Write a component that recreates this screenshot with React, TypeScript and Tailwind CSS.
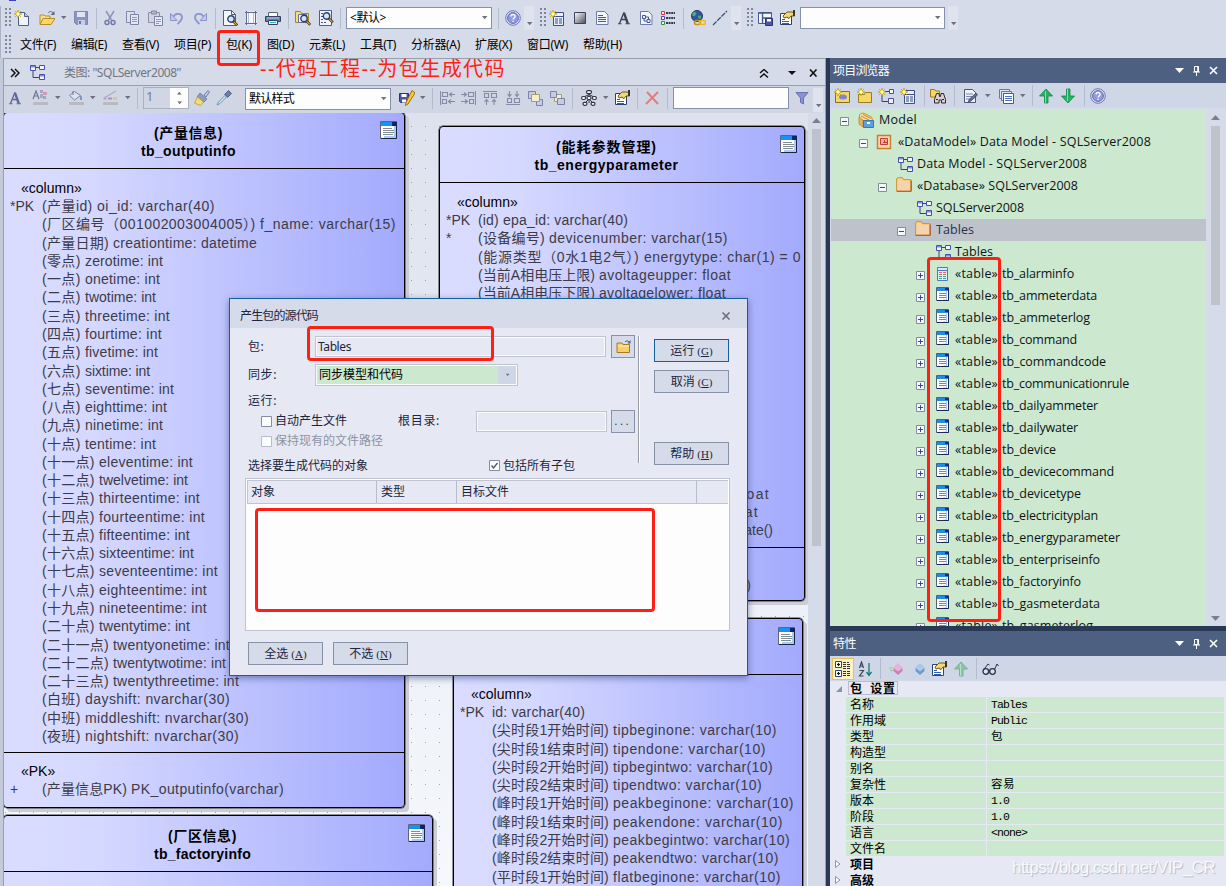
import { useLayoutEffect, useRef, useState, type ReactNode } from 'react';

/* ---------- text fitted to a given advance width ---------- */
function T({ w, className = '', children }: { w: number; className?: string; children: string }) {
  const ref = useRef<HTMLSpanElement>(null);
  const [ls, setLs] = useState(0);
  useLayoutEffect(() => {
    if (!ref.current) return;
    const natural = ref.current.getBoundingClientRect().width;
    setLs((w - natural) / children.length);
  }, []);
  return (
    <span ref={ref} className={`inline-block shrink-0 whitespace-pre ${className}`} style={{ letterSpacing: `${ls}px` }}>
      {children}
    </span>
  );
}

/* ---------- icons ---------- */
type P = { className?: string };
const I = ({ className = '', w = 16, h = 16, children }: { className?: string; w?: number; h?: number; children: ReactNode }) => (
  <svg width={w} height={h} viewBox={`0 0 ${w} ${h}`} className={`block shrink-0 ${className}`} fill="none">
    {children}
  </svg>
);
const Spark = () => (
  <g>
    <path d="M4 0v8M0 4h8M1.3 1.3l5.4 5.4M6.7 1.3L1.3 6.7" stroke="#b89500" />
    <path d="M4 1.2L6.8 4 4 6.8 1.2 4z" fill="#ffef5a" stroke="#d0ac00" strokeWidth=".7" />
    <circle cx="4" cy="4" r="1.2" fill="#fff" />
  </g>
);
const NewDoc = (p: P) => (
  <I {...p}>
    <path d="M4.5 2.5h6l4 4v9h-10z" fill="#eef3fd" stroke="#4f6183" />
    <path d="M10.5 2.5v4h4" fill="#b9c8e6" stroke="#4f6183" />
    <Spark />
  </I>
);
const OpenFolder = (p: P) => (
  <I {...p}>
    <path d="M1 14V5h4l1 1h5v3" fill="#f9e08c" stroke="#b98d24" />
    <path d="M1 14.5l3-6h12l-4 6z" fill="#fbd769" stroke="#b98d24" />
    <path d="M9 3c1.500-2 4-2 5 0" stroke="#5b6a85" />
    <path d="M15.500 1v4h-4z" fill="#5b6a85" />
  </I>
);
const Floppy = ({ className = '', dim = false }: P & { dim?: boolean }) => (
  <I className={className}>
    <path d="M1.500 1.500h13v13h-11l-2-2z" fill={dim ? '#8b93c2' : '#4b56a6'} stroke={dim ? '#7d86b5' : '#2b3477'} />
    <path d="M4 2h8v5H4z" fill="#dfe5f4" />
    <path d="M5 10h7v5H5z" fill="#c6cde4" />
    <path d="M6 11h2v3H6z" fill="#6a72a8" />
  </I>
);
const Cut = (p: P) => (
  <I {...p}>
    <path d="M4 1l5.500 9M12 1L6.500 10" stroke="#8d95b8" strokeWidth="1.500" />
    <circle cx="5" cy="12.500" r="2" stroke="#6d77a8" strokeWidth="1.400" />
    <circle cx="11" cy="12.500" r="2" stroke="#6d77a8" strokeWidth="1.400" />
  </I>
);
const Copy = (p: P) => (
  <I {...p}>
    <path d="M2.500 1.500h8v11h-8z" fill="#dbe0ef" stroke="#8189ad" />
    <path d="M6.500 4.500h8v10h-8z" fill="#e4e8f4" stroke="#7a83aa" />
    <path d="M8 7.500h5M8 9.500h5M8 11.500h5" stroke="#8f98bd" />
  </I>
);
const Paste = (p: P) => (
  <I {...p}>
    <path d="M1.500 2.500h11v10h-11z" fill="#d3d3dd" stroke="#8c8fa8" />
    <path d="M4.500 1h5v3h-5z" fill="#b4b9cf" stroke="#8085a3" />
    <path d="M7.500 6.500h8v9h-8z" fill="#e7eaf5" stroke="#7a83aa" />
    <path d="M9 9.500h5M9 11.500h5M9 13.500h3" stroke="#8f98bd" />
  </I>
);
const Undo = ({ className = '', flip = false }: P & { flip?: boolean }) => (
  <I className={className}>
    <g transform={flip ? 'translate(16 0) scale(-1 1)' : undefined}>
      <path d="M4 7.500C5.500 3 12.500 2.500 13 7c.3 3-2 4.500-4.500 7" stroke="#8b94cc" strokeWidth="1.800" />
      <path d="M1.500 3.500v7h6.500z" fill="#c3c9ea" stroke="#838cc4" strokeWidth=".9" />
    </g>
  </I>
);
const Lens = ({ x = 6, y = 6 }: { x?: number; y?: number }) => (
  <g transform={`translate(${x} ${y})`}>
    <circle cx="3" cy="3" r="3.200" fill="#cfe6fb" stroke="#2f3f68" strokeWidth="1.400" />
    <path d="M5.300 5.300l4 4" stroke="#3d3322" strokeWidth="2.600" />
    <path d="M5.800 5.800l3 3" stroke="#e8b23a" strokeWidth="1.100" />
  </g>
);
const Preview = (p: P) => (
  <I {...p}>
    <path d="M1.500 .5h8l4 4v11h-12z" fill="#f4f7fd" stroke="#4f5f83" />
    <path d="M9.500 .5v4h4" stroke="#4f5f83" />
    <Lens />
  </I>
);
const PageSetup = (p: P) => (
  <I {...p}>
    <path d="M3.500 1.500h7l3 3v10h-10z" fill="#f6f8fd" />
    <path d="M3.500 1v14M12.500 1v14M2 2.500h12M2 13.500h12" stroke="#5f6c90" />
    <path d="M5.500 3v10M10.500 3v10" stroke="#b5bdd2" />
  </I>
);
const Printer = (p: P) => (
  <I {...p}>
    <path d="M3.500 2.500h9v4h-9z" fill="#fff" stroke="#57627d" />
    <path d="M.5 6.500h15v5H.5z" fill="#6c7fa6" stroke="#36425e" />
    <path d="M2 8h12" stroke="#a8d6f5" />
    <path d="M3.500 10.500h9v4h-9z" fill="#dff3ff" stroke="#36425e" />
    <path d="M5 12.500h6" stroke="#27b4c8" />
  </I>
);
const FolderFind = (p: P) => (
  <I {...p}>
    <path d="M.5 1.500h5l1 2h7v9H.5z" fill="#f7dc7a" stroke="#a88326" />
    <path d="M3.500 4.500h8v8h-8z" fill="#f4f7fd" stroke="#66719a" />
    <Lens x={6} y={5.500} />
  </I>
);
const DocFind = (p: P) => (
  <I {...p}>
    <path d="M1.500 .5h12v15h-12z" fill="#f1f4fb" stroke="#4f5f83" />
    <path d="M3 3.500h5M3 6.500h3M3 9.500h3M3 12.500h6" stroke="#45548c" strokeDasharray="2 1" />
    <Lens x={5.500} y={3} />
  </I>
);
const Help = (p: P) => (
  <I {...p}>
    <circle cx="8" cy="8" r="7.300" fill="#e0e4f6" stroke="#6b76b8" />
    <circle cx="8" cy="8" r="5.400" fill="#929bdd" stroke="#5f6abb" />
    <path d="M6 6.500c0-2.700 4.200-2.600 4.100-.1C10 8 8.100 8 8.100 9.600M8.100 10.700v1.300" stroke="#fff" strokeWidth="1.300" />
  </I>
);
const NewList = (p: P) => (
  <I {...p}>
    <path d="M4.500 2.500h10v4h-10zM4.500 6.500h10v9h-10z" fill="#e9effb" stroke="#3d4f86" />
    <path d="M6 9h3M10 9h3M6 11h3M10 11h3M6 13h3M10 13h3" stroke="#3d4f86" />
    <Spark />
  </I>
);
const GradBox = (p: P) => (
  <I {...p}>
    <defs>
      <linearGradient id="gb" x1="0" y1="0" x2="1" y2="1"><stop stopColor="#fff" /><stop offset="1" stopColor="#4a4d58" /></linearGradient>
    </defs>
    <path d="M2.500 2.500h11v11h-11z" fill="url(#gb)" stroke="#3c4357" />
  </I>
);
const DocLines = (p: P) => (
  <I {...p}>
    <path d="M2.500 1.500h8l3.500 3.500v9.500H2.500z" fill="#f2f5fc" stroke="#6d7ba8" />
    <path d="M4 5.500h5M4 7.500h8M4 9.500h8M4 11.500h8" stroke="#4454a0" />
  </I>
);
const LetterA = ({ className = '', c = '#3a4254' }: P & { c?: string }) => (
  <I className={className}>
    <path d="M3.500 13.500L7.700 3h1M4.800 9.500h6" stroke={c} strokeWidth="1.300" />
    <path d="M8 3l3.800 10.500" stroke={c} strokeWidth="2.300" />
    <path d="M2 13.700h3.500M9.500 13.700H14" stroke={c} strokeWidth="1.100" />
  </I>
);
const DocTree = (p: P) => (
  <I {...p}>
    <path d="M2.500 1.500h8l3.500 3.500v9.500H2.500z" fill="#f2f5fc" stroke="#6d7ba8" />
    <path d="M4.500 5.500h3v3h-3zM9 9.500h3v3H9zM7.500 7h3v2.500M6 8.500V11h3" stroke="#4454a0" />
  </I>
);
const Legend = (p: P) => (
  <I {...p}>
    <path d="M1.500 1.500h3v3h-3z" fill="#fff" stroke="#d33" />
    <path d="M1.500 6.500h3v3h-3z" fill="#fff" stroke="#44b" />
    <path d="M1.500 11.500h3v3h-3z" fill="#fff" stroke="#293" />
    <path d="M6 3h9M6 8h9M6 13h9" stroke="#343a52" strokeWidth="2" strokeDasharray="2 .6" />
  </I>
);
const Globe = (p: P) => (
  <I {...p}>
    <circle cx="7" cy="6" r="5.500" fill="#2c57a4" stroke="#1f3a66" />
    <path d="M3 2.500c3-1 4 0 3 2s-3 2-4 1zM8 6c2-1 4 0 3 2s-3 1-3-2z" fill="#57a86a" />
    <rect x="4.500" y="10.500" width="6" height="4" rx="2" stroke="#c8920c" strokeWidth="1.500" />
    <rect x="9.500" y="10.500" width="6" height="4" rx="2" stroke="#eeb91e" strokeWidth="1.500" />
  </I>
);
const DashLine = (p: P) => (
  <I {...p}><path d="M1 15L15 1" stroke="#34507c" strokeWidth="1.200" strokeDasharray="5 1" /></I>
);
const LayoutSave = (p: P) => (
  <I {...p}>
    <path d="M1.500 2.500h13v11h-13z" fill="#f4f7fd" stroke="#44598e" />
    <path d="M2 3h12M5.500 3v10M6 8h9" stroke="#44598e" strokeWidth="1.400" />
    <path d="M8.500 8.500h7v7h-7z" fill="#4b56a6" stroke="#2b3477" />
    <path d="M10 9h4v2.500h-4z" fill="#fff" />
  </I>
);
const Hand = (p: P) => (
  <I {...p}>
    <path d="M1.500 3.500h11v11h-11z" fill="#fff" stroke="#2d426f" />
    <path d="M3 9.500h3M3 11.500h7M3 13.500h7" stroke="#2d62b0" />
    <path d="M4 6l4-4h5l2.500 1v3H12L9.500 9l-1-2L5 8z" fill="#f3d875" stroke="#6f5b1c" />
    <path d="M14 0h2v6h-2z" fill="#3a3626" />
  </I>
);
const Diagram = (p: P) => (
  <I {...p}>
    <path d="M4 7v6.500h6M7 3.500h4" stroke="#3c4468" />
    <path d="M1.500 1.500h5v5h-5zM10.500 1.500h5v4h-5zM10.500 10.500h5v5h-5z" fill="#f3f5ff" stroke="#474fae" />
    <path d="M2 2h4v1.500H2zM11 11h4v1.500h-4z" fill="#848ce0" />
  </I>
);
const NewDiagram = (p: P) => (
  <I {...p}>
    <path d="M4 7v6.500h6M7 3.500h4" stroke="#3c4468" />
    <path d="M11.500 1.500h4v4h-4zM10.500 10.500h5v5h-5z" fill="#f3f5ff" stroke="#474fae" />
    <Spark />
  </I>
);
const FillColor = (p: P) => (
  <I {...p}>
    <path d="M1 9l3-8 3 8M2 6h4" stroke="#6e7690" strokeWidth="1.200" />
    <path d="M8 0h3v3H8z" fill="#b79ad0" /><path d="M11 2h4v3h-4z" fill="#cf9bb2" /><path d="M8 4h3v4H8z" fill="#93b6ad" /><path d="M11 6h3v3h-3z" fill="#9fa4cf" />
    <path d="M1 12h15v3H1z" fill="#b8bac3" />
  </I>
);
const Bucket = (p: P) => (
  <I {...p}>
    <path d="M1.500 5.500l5-4 6 4-6 4.500z" fill="#dbe3f3" stroke="#7584a5" />
    <path d="M12 5c2.500 1 2 4 2 5h-2z" fill="#7d94bd" />
    <path d="M5 1v4" stroke="#6f7790" />
    <path d="M1 12h15v3H1z" fill="#b8bac3" />
  </I>
);
const LineColor = (p: P) => (
  <I {...p}>
    <path d="M2 8L14 1" stroke="#98a0bd" />
    <path d="M1.500 7.500h3v2h-3z" fill="#c3a2b8" /><path d="M6 7.500h4v2H6z" fill="#b38bc0" /><path d="M11 7.500h4v2h-4z" fill="#d3c286" />
    <path d="M1 12h15v3H1z" fill="#b8bac3" />
  </I>
);
const Brush = (p: P) => (
  <I {...p}>
    <path d="M10 5l4-4.500 1.500 1.500L12 7z" fill="#b9c6e6" stroke="#6e7fae" />
    <path d="M6 3l7 6-3 3-7-5z" fill="#8f9cb4" stroke="#6c7a99" strokeWidth=".8" />
    <path d="M3.500 7l6 5-3 3.500L.5 13z" fill="#f4dc7c" stroke="#c7a43a" />
  </I>
);
const Dropper = (p: P) => (
  <I {...p}>
    <path d="M9 4l3.500-3.500 3 3L12 7z" fill="#717da6" stroke="#596691" />
    <path d="M8 4l4 4M9 5.500L2.500 12l-1.500 3 3-1.500L10.500 7z" fill="#cdeaf3" stroke="#7590b1" />
  </I>
);
const SavePen = (p: P) => (
  <I {...p}>
    <path d="M.5 3.500h9v9h-8l-1-1z" fill="#4b56a6" stroke="#2b3477" />
    <path d="M2.500 4h5v3h-5zM3 9.500h4v3H3z" fill="#fff" />
    <path d="M13 .5l3 2.500-7 11-2.500 1.500.5-3z" fill="#ffc926" stroke="#9b6d13" />
  </I>
);
const Align = ({ className = '', k }: P & { k: 'l' | 'r' | 't' | 'b' }) => (
  <I className={className}>
    <g stroke="#848ba4" strokeWidth="1.100">
      {k === 'l' && <path d="M.5 1v14M2.500 2.500h5v4h-5zM9 4.500h6M12 2.500l-2.500 2 2.500 2M2.500 9.500h4v4h-4zM8 11.500h7M11 9.500l-2.500 2 2.500 2" />}
      {k === 'r' && <path d="M15.500 1v14M8.500 2.500h5v4h-5zM1 4.500h6M4 2.500l2.500 2L4 6.500M9.500 9.500h4v4h-4zM1 11.500h7M5 9.500l2.500 2-2.500 2" />}
      {k === 't' && <path d="M1 1.500h14M2.500 3.500h4v4h-4zM9.500 3.500h5v4h-5zM4.500 15V9.500M2.500 12l2-2.500 2 2.500M12 15V9.500M10 12l2-2.500 2 2.500" />}
      {k === 'b' && <path d="M1 14.500h14M2.500 8.500h4v4h-4zM9.500 8.500h5v4h-5zM4.500 1v5.500M2.500 4l2 2.500L6.500 4M12 1v5.500M10 4l2 2.500L14 4" />}
    </g>
  </I>
);
const Front = (p: P) => (
  <I {...p}>
    <path d="M1.500 1.500h7v7h-7zM9.500 9.500h6v6h-6z" fill="#c5cce4" stroke="#7983aa" />
    <path d="M4.500 4.500h8v7h-8z" fill="#f5eecb" stroke="#a59c72" />
  </I>
);
const Back = (p: P) => (
  <I {...p}>
    <path d="M5.500 4.500h7v7h-7z" fill="#f5eecb" stroke="#a59c72" />
    <path d="M1.500 1.500h6v6h-6zM8.500 8.500h7v6h-7z" fill="#c5cce4" stroke="#7983aa" />
  </I>
);
const Hier = (p: P) => (
  <I {...p}>
    <path d="M8 3v10M8 4.500L3 7M8 4.500L13 7M8 9l-4 4M8 9l4 4" stroke="#2f3340" />
    <rect x="5.500" y=".6" width="5" height="3" rx="1.500" fill="#fff" stroke="#2f3340" strokeWidth="1.200" />
    <rect x=".6" y="6.500" width="4" height="3" rx="1.500" fill="#fff" stroke="#2f3340" strokeWidth="1.200" />
    <rect x="6" y="6.500" width="4" height="3" rx="1.500" fill="#fff" stroke="#2f3340" strokeWidth="1.200" />
    <rect x="11.400" y="6.500" width="4" height="3" rx="1.500" fill="#fff" stroke="#2f3340" strokeWidth="1.200" />
    <rect x="2" y="12.300" width="4" height="3" rx="1.500" fill="#fff" stroke="#2f3340" strokeWidth="1.200" />
    <rect x="10" y="12.300" width="4" height="3" rx="1.500" fill="#fff" stroke="#2f3340" strokeWidth="1.200" />
  </I>
);
const RedX = (p: P) => (
  <I {...p}><path d="M3 2l11 12M14 2L2 14" stroke="#da7f84" strokeWidth="2" /></I>
);
const Funnel = (p: P) => (
  <I {...p}><path d="M2 2.500h12L9.500 8v6l-3-1.500V8z" fill="#8a92d0" stroke="#6a72b5" /></I>
);
const NewPkg = (p: P) => (
  <I {...p}><path d="M1.500 3.500h14v11h-14z" fill="#f5d765" stroke="#80702a" /><ellipse cx="9" cy="9" rx="4" ry="2.500" fill="#7f84cc" /><Spark /></I>
);
const NewFolder = (p: P) => (
  <I {...p}><path d="M1.500 6.500h6l1-2h6v10h-13z" fill="#f5d765" stroke="#9a7c24" /><Spark /></I>
);
const Binoc = (p: P) => (
  <I {...p}>
    <path d="M.5 1.500h4l1 1.500h4v6h-9z" fill="#f5d765" stroke="#9a7c24" />
    <path d="M6.500 5.500h2.500l.5 3h1l.5-3h2.500l2 6v3.500h-4v-3h-2.500v3H4.500v-3.500z" fill="#d9cfcf" stroke="#2d2730" />
    <path d="M6 11.500h2M12 11.500h2" stroke="#2d2730" />
  </I>
);
const DocPen = (p: P) => (
  <I {...p}>
    <path d="M2.500 1.500h8l3 3v10h-11z" fill="#eef1f9" stroke="#4b5672" />
    <path d="M4 6h7M4 8.500h6M4 11h4" stroke="#7d86a4" />
    <path d="M14 5l1.500 2L9 13l-2.500 1 .5-2.500z" fill="#5f708e" stroke="#323f5a" strokeWidth=".7" />
  </I>
);
const Windows = (p: P) => (
  <I {...p}>
    <path d="M1.500 1.500h10v9h-10z" fill="#dfe6f7" stroke="#6a76ae" />
    <path d="M3.500 3.500h10v9h-10z" fill="#dfe6f7" stroke="#6a76ae" />
    <path d="M5.500 5.500h10v10h-10z" fill="#fff" stroke="#3c59a5" />
    <path d="M7 8.500h7M7 10.500h7M7 12.500h7" stroke="#4d6fc0" />
  </I>
);
const Arrow = ({ className = '', down = false, dim = false }: P & { down?: boolean; dim?: boolean }) => (
  <I className={className}>
    <g transform={down ? 'translate(0 16) scale(1 -1)' : undefined}>
      <path d="M8 1l6.500 7H10v7H6.500V8h-5z" fill={dim ? '#8cc4a8' : '#25b263'} stroke={dim ? '#6fab8e' : '#14834a'} strokeWidth=".8" />
      <path d="M7.500 3v12" stroke={dim ? '#b8dfcb' : '#7fe0a8'} />
    </g>
  </I>
);
const ModelIcon = (p: P) => (
  <I {...p}>
    <path d="M1.500 9V2.500l3-1.500 3 1 6 3 1 3" fill="#f7e1a2" stroke="#cd9637" />
    <path d="M3 4l8 4M5 2.500l8 4" stroke="#c98a2c" />
    <path d="M1 5v7l4 3V8z" fill="#e9b264" stroke="#b57c2a" strokeWidth=".7" />
    <path d="M5.500 8.500h10v7h-10z" fill="#5ba0dc" stroke="#3b78b4" />
    <path d="M9 10h3v2H9z" fill="#fff" />
  </I>
);
const PkgIcon = (p: P) => (
  <I {...p}>
    <path d="M1.500 1.500h13v13h-13z" fill="#f9d9ae" stroke="#ca7d2a" strokeWidth="1.400" />
    <path d="M4.500 4.500h7v6h-7z" fill="#f6aea6" stroke="#c53c34" /><path d="M7 8.500h4M8.500 6v2" stroke="#c53c34" />
  </I>
);
const FolderIcon = (p: P) => (
  <I {...p}>
    <path d="M.7 2l1-1.300h4.600l1.200 2h7.300V14H.7z" fill="#ffd58d" stroke="#d08a28" />
    <path d="M1.500 4.500H14V13.500H1.500z" fill="#f6d3b0" />
    <path d="M.7 14.300h14.600V3.500" stroke="#ac5322" />
  </I>
);
const TableIcon = (p: P) => (
  <I w={13} h={14} {...p}>
    <path d="M.5.5h12v13H.5z" fill="#fff" stroke="#4f5f84" />
    <path d="M1 1h11v3H1z" fill="#1f8de8" /><path d="M9 1h3v2H9z" fill="#182e78" />
    <path d="M10.500 4v9H7" stroke="#9fcdf5" /><path d="M3 6.500h7M3 8.500h7M3 10.500h7" stroke="#7d8592" />
    <path d="M12.500 1v12.500H1" stroke="#1c2c55" />
  </I>
);
const TableIconB = (p: P) => (
  <I w={13} h={14} {...p}>
    <path d="M1.500 .5h10v13h-10z" fill="#dcecff" stroke="#4f79c4" />
    <path d="M2 3.500h9" stroke="#4f79c4" /><path d="M3 5.500h7M3 7.500h7" stroke="#e56a66" strokeDasharray="3 1" /><path d="M3 9.500h7M3 11.500h7" stroke="#3fa68e" strokeDasharray="3 1" />
  </I>
);
const NodeIcon = (p: P) => (
  <I w={17} h={18} {...p}>
    <path d="M.5.5h16v17H.5z" fill="#fff" stroke="#5d6577" />
    <path d="M1 1h15v4H1z" fill="#1593f5" /><path d="M12 1h4v4h-4z" fill="#0a2470" />
    <path d="M14 5h2v12H4v-2h10z" fill="#a4cff2" />
    <path d="M3 7.500h9M3 9.500h11M3 11.500h11M3 13.500h10" stroke="#868a92" /><path d="M16.500 1v16.500H1" stroke="#1d2440" />
  </I>
);
const Cat = (p: P) => (
  <I {...p}>
    <path d="M.5 .5h6v6h-6zM.5 9.500h6v6h-6z" fill="#fff" stroke="#26427e" />
    <path d="M2 3.500h3M3.500 2v3M2 12.500h3M3.500 11v3" stroke="#111" strokeWidth="1.200" />
    <path d="M8 1.500h6M8 3.500h8M8 5.500h7M8 7.500h8M8 10.500h7M8 12.500h8M8 14.500h7" stroke="#333" strokeDasharray="3 1" />
  </I>
);
const AZ = (p: P) => (
  <I {...p}>
    <path d="M1.500 7l2-6 2 6M2 5h3M1.500 9.500h4l-4 5.500h4" stroke="#3a4358" strokeWidth="1.200" />
    <path d="M11 2v12M8.500 11l2.500 3.500L13.500 11" stroke="#177c77" strokeWidth="1.300" />
  </I>
);
const Diamond = ({ className = '', pink = false }: P & { pink?: boolean }) => (
  <I className={className}>
    <path d="M9 2.500L13.500 7v3L9 14 4.500 10V7z" fill={pink ? '#c583bb' : '#6d9bcc'} />
    <path d="M9 2.500L13.500 7 9 10.500 4.500 7z" fill={pink ? '#ebb0dd' : '#a9cbea'} />
    {pink && <path d="M0 7h4M1 9.500h4" stroke="#a5bfa6" />}
  </I>
);
const Glasses = (p: P) => (
  <I w={17} {...p}>
    <circle cx="3.800" cy="10.500" r="2.800" fill="#dbe2ee" stroke="#2c3350" strokeWidth="1.300" />
    <circle cx="10.500" cy="10.500" r="2.800" fill="#dbe2ee" stroke="#2c3350" strokeWidth="1.300" />
    <path d="M6.300 10c.5-1 1.200-1 1.700 0M1.500 9L6 3l1.500 1M12.500 8.500L15 3l1.500 2" stroke="#2c3350" />
  </I>
);

/* ---------- small toolbar parts ---------- */
const Grip = ({ className = '' }: P) => (
  <span className={`h-5 w-[6px] shrink-0 bg-[radial-gradient(circle_at_1px_1px,#78849d_0.7px,transparent_0.9px)] bg-[length:4px_4px] ${className}`} />
);
const Sep = ({ className = '' }: P) => <span className={`h-[21px] w-px shrink-0 bg-[#b3bccd] ${className}`} />;
const Tri = ({ className = '', c = '#6c7080' }: P & { c?: string }) => (
  <I w={7} h={4} className={className}><path d="M1 0h5.500L3.700 3.300z" fill={c} /></I>
);
const Overflow = ({ className = '' }: P) => (
  <span className={`flex h-6 w-[10px] shrink-0 items-end justify-center bg-[#dfe3ee] pb-1 ${className}`}><Tri /></span>
);
const Combo = ({ className = '', children }: P & { children?: ReactNode }) => (
  <span className={`flex h-[22px] shrink-0 items-center justify-between border border-[#8591a8] bg-[#fdfdfd] pr-[3px] pl-[3px] text-[12px] text-black ${className}`}>
    <span>{children}</span><Tri />
  </span>
);

/* ---------- diagram ---------- */
type Row = [mark: string, comment: string, commentW: number, name: string, nameW: number];

const outputRows: Row[] = [
  ['*PK', '(产量id) ', 55, 'oi_id: varchar(40)', 118],
  ['', '(厂区编号（001002003004005）) ', 218, 'f_name: varchar(15)', 136],
  ['', '(产量日期) ', 71, 'creationtime: datetime', 144],
  ['', '(零点) ', 43, 'zerotime: int', 78],
  ['', '(一点) ', 43, 'onetime: int', 75],
  ['', '(二点) ', 43, 'twotime: int', 71],
  ['', '(三点) ', 43, 'threetime: int', 85],
  ['', '(四点) ', 43, 'fourtime: int', 77],
  ['', '(五点) ', 43, 'fivetime: int', 73],
  ['', '(六点) ', 43, 'sixtime: int', 65],
  ['', '(七点) ', 43, 'seventime: int', 89],
  ['', '(八点) ', 43, 'eighttime: int', 82],
  ['', '(九点) ', 43, 'ninetime: int', 78],
  ['', '(十点) ', 43, 'tentime: int', 71],
  ['', '(十一点) ', 57, 'eleventime: int', 94],
  ['', '(十二点) ', 57, 'twelvetime: int', 89],
  ['', '(十三点) ', 57, 'thirteentime: int', 101],
  ['', '(十四点) ', 57, 'fourteentime: int', 106],
  ['', '(十五点) ', 57, 'fifteentime: int', 91],
  ['', '(十六点) ', 57, 'sixteentime: int', 95],
  ['', '(十七点) ', 57, 'seventeentime: int', 119],
  ['', '(十八点) ', 57, 'eighteentime: int', 108],
  ['', '(十九点) ', 57, 'nineteentime: int', 108],
  ['', '(二十点) ', 57, 'twentytime: int', 91],
  ['', '(二十一点) ', 71, 'twentyonetime: int', 117],
  ['', '(二十二点) ', 71, 'twentytwotime: int', 113],
  ['', '(二十三点) ', 71, 'twentythreetime: int', 126],
  ['', '(白班) ', 43, 'dayshift: nvarchar(30)', 145],
  ['', '(中班) ', 43, 'middleshift: nvarchar(30)', 164],
  ['', '(夜班) ', 43, 'nightshift: nvarchar(30)', 154],
];
const energyRows: Row[] = [
  ['*PK', '(id) ', 25, 'epa_id: varchar(40)', 125],
  ['*', '(设备编号) ', 71, 'devicenumber: varchar(15)', 179],
  ['', '(能源类型（0水1电2气）) ', 166, 'energytype: char(1) = 0', 157],
  ['', '(当前A相电压上限) ', 121, 'avoltageupper: float', 132],
  ['', '(当前A相电压下限) ', 121, 'avoltagelower: float', 127],
];
const periodRows: Row[] = [
  ['*PK', '', 0, 'id: varchar(40)', 93],
  ['', '(尖时段1开始时间) ', 121, 'tipbeginone: varchar(10)', 164],
  ['', '(尖时段1结束时间) ', 121, 'tipendone: varchar(10)', 153],
  ['', '(尖时段2开始时间) ', 121, 'tipbegintwo: varchar(10)', 160],
  ['', '(尖时段2结束时间) ', 121, 'tipendtwo: varchar(10)', 149],
  ['', '(峰时段1开始时间) ', 121, 'peakbeginone: varchar(10)', 181],
  ['', '(峰时段1结束时间) ', 121, 'peakendone: varchar(10)', 170],
  ['', '(峰时段2开始时间) ', 121, 'peakbegintwo: varchar(10)', 177],
  ['', '(峰时段2结束时间) ', 121, 'peakendtwo: varchar(10)', 166],
  ['', '(平时段1开始时间) ', 121, 'flatbeginone: varchar(10)', 168],
];

function Rows({ rows }: { rows: Row[] }) {
  return (
    <>
      {rows.map(([mark, comment, cw, name, nw]) => (
        <li key={comment + name} className="flex h-[18.28px] items-center pl-[6px]">
          <span className="w-8 shrink-0">{mark}</span>
          {comment && <T w={cw}>{comment}</T>}
          <T w={nw}>{name}</T>
        </li>
      ))}
    </>
  );
}
function Node({ className, title, name, titleW, nameW, children }: { className: string; title: string; name: string; titleW: number; nameW: number; children?: ReactNode }) {
  return (
    <section className={`absolute rounded-[4px] border-[1.5px] border-black bg-[linear-gradient(90deg,#dadcff_0%,#d6d9ff_20%,#a3aafd_100%)] text-[14px] leading-[18px] text-[#3c3c48] shadow-[0_0_0_0.5px_#333,4px_4px_0_#cbced6] ${className}`}>
      <header className="flex h-[56px] justify-between border-b-[1.5px] border-black pr-[7px] font-bold text-black">
        <div className="flex grow flex-col items-center pt-[11px] pr-[7px]">
          <T w={titleW}>{title}</T>
          <T w={nameW}>{name}</T>
        </div>
        <NodeIcon className="mt-2" />
      </header>
      {children}
    </section>
  );
}

/* ---------- project tree ---------- */
type Leaf = [name: string, width: number];
const tables: Leaf[] = [
  ['tb_alarminfo', 72], ['tb_ammeterdata', 95], ['tb_ammeterlog', 88], ['tb_command', 75], ['tb_commandcode', 104],
  ['tb_communicationrule', 127], ['tb_dailyammeter', 96], ['tb_dailywater', 76], ['tb_device', 54], ['tb_devicecommand', 112],
  ['tb_devicetype', 79], ['tb_electricityplan', 96], ['tb_energyparameter', 118], ['tb_enterpriseinfo', 98],
  ['tb_factoryinfo', 79], ['tb_gasmeterdata', 98], ['tb_gasmeterlog', 91],
];
const Expander = ({ plus = false, className = '' }: P & { plus?: boolean }) => (
  <I w={9} h={9} className={`mt-[3px] ${className}`}>
    <path d="M.5.5h8v8h-8z" fill="#f7f8fb" stroke="#848b99" />
    <path d={plus ? 'M2 4.500h5M4.500 2v5' : 'M2 4.500h5'} stroke="#2c4aa0" />
  </I>
);
const TreeRow = ({ className = '', children }: P & { children: ReactNode }) => (
  <li className={`flex h-[22px] shrink-0 items-center ${className}`}>{children}</li>
);

const PanelHead = ({ title, w }: { title: string; w: number }) => (
  <header className="flex h-[25px] shrink-0 items-center bg-[#4d6082] pr-[8px] pl-[3px] text-[12px] text-white">
    <T w={w}>{title}</T>
    <I w={9} h={5} className="ml-auto"><path d="M0 0h9L4.500 5z" fill="#fff" /></I>
    <I w={9} h={10} className="ml-[8px]"><path d="M2.500.5h4v5h-4zM5.700 1v5M1 6h7M4.500 6v4" stroke="#fff" /></I>
    <I w={9} h={9} className="ml-[8px]"><path d="M1 1l7 7M8 1L1 8" stroke="#fff" strokeWidth="1.600" /></I>
  </header>
);

const props: [string, string, number][] = [
  ['名称', 'Tables', 36], ['作用域', 'Public', 36], ['类型', '包', 12], ['构造型', '', 0], ['别名', '', 0],
  ['复杂性', '容易', 24], ['版本', '1.0', 18], ['阶段', '1.0', 18], ['语言', '<none>', 36], ['文件名', '', 0],
];

/* ---------- dialog ---------- */
const DlgButton = ({ label, k, className = '' }: P & { label: string; k: string }) => (
  <button className={`flex h-[23px] w-[75px] shrink-0 items-center justify-center border bg-[#d6dbe9] text-[12px] text-[#1b2540] ${className}`}>
    {label}<span className="pl-[3px] font-['Liberation_Serif'] text-[11px]">(<u>{k}</u>)</span>
  </button>
);
const Check = ({ on = false, dim = false, className = '' }: P & { on?: boolean; dim?: boolean }) => (
  <I w={11} h={11} className={className}>
    <path d="M.5.5h10v10H.5z" fill="#fdfdfd" stroke={dim ? '#b7bbc6' : '#868d9f'} />
    {on && <path d="M2.500 5.500l2 2.500 4-5" stroke="#4c5363" strokeWidth="1.300" />}
  </I>
);
const field = 'shrink-0 border border-[#c0c4d0] bg-[#e6e9f3] shadow-[inset_0_0_0_1px_#fbfbfd]';

function Dialog() {
  return (
    <div className="absolute top-[298px] left-[229px] flex h-[378px] w-[519px] flex-col border border-[#15609c] bg-[#e6e9f3] text-[12px] leading-[16px] text-[#1b2540] shadow-[0_2px_7px_rgba(40,60,120,0.55)]">
      <header className="flex h-[29px] shrink-0 items-center justify-between bg-[#d6dbe9] pt-[5px] pr-[17px] pl-[10px]">
        <T w={78}>产生包的源代码</T>
        <I w={8} h={8}><path d="M.5.500l7 7M7.500.5l-7 7" stroke="#666a75" strokeWidth="1.500" /></I>
      </header>
      <div className="flex h-[150px] shrink-0">
        <div className="flex w-[408px] shrink-0 flex-col pl-[18px]">
          <div className="mt-[7px] flex h-[23px] items-center">
            <T w={16} className="mr-[51px]">包:</T>
            <div className={`flex h-[21px] w-[291px] items-center pl-[2px] ${field}`}><T w={33}>Tables</T></div>
            <div className="ml-[5px] flex h-[23px] w-6 items-center justify-center border border-[#8791a7] bg-[#d6dbe9]">
              <I w={15} h={13}><path d="M1 12.500V3h5l1 1.500h6.500v8z" fill="#f7cf6c" stroke="#b0761e" /><path d="M2 6h11" stroke="#fdf0bc" /><path d="M9 2c1-1.500 3-1.500 4 0" stroke="#4f6080" /><path d="M14.500 0v3.500h-3z" fill="#4f6080" /></I>
            </div>
          </div>
          <div className="mt-[6px] flex h-[22px] items-center">
            <T w={29} className="mr-[38px]">同步:</T>
            <div className="flex h-[22px] w-[203px] shrink-0 items-center justify-between border border-[#c0c4d0] bg-[#cce8cf] pl-[3px] text-black shadow-[inset_0_0_0_1px_#fbfbfd]">
              <T w={84}>同步模型和代码</T>
              <span className="mr-px flex h-[18px] w-[18px] items-center justify-center bg-[#cfd6e5]"><Tri className="scale-75" /></span>
            </div>
          </div>
          <div className="mt-[7px] h-4"><T w={29}>运行:</T></div>
          <div className="flex h-[24px] items-center">
            <Check className="ml-[13px] mt-[1px]" />
            <T w={72} className="ml-[3px]">自动产生文件</T>
            <T w={42} className="ml-[51px]">根目录:</T>
            <div className={`ml-[36px] h-[21px] w-[131px] ${field}`} />
            <div className="ml-[4px] flex h-[23px] w-6 items-center justify-center border border-[#8791a7] bg-[#d6dbe9] text-[10px] tracking-[3px]">...</div>
          </div>
          <div className="flex h-4 items-center text-[#8d93a3]">
            <Check dim className="ml-[13px]" />
            <T w={108} className="ml-[3px]">保持现有的文件路径</T>
          </div>
          <div className="mt-[8px] flex h-[18px] items-center">
            <T w={120}>选择要生成代码的对象</T>
            <Check on className="mb-[2px] ml-[121px]" />
            <T w={72} className="ml-[3px]">包括所有子包</T>
          </div>
        </div>
        <div className="mt-[8px] h-[127px] w-[2px] border-r border-l border-r-white border-l-[#9a9ca4]" />
        <div className="flex flex-col pl-[14px]">
          <DlgButton label="运行" k="G" className="mt-[11px] border-[#15609c]" />
          <DlgButton label="取消" k="C" className="mt-[8px] border-[#8791a7]" />
          <DlgButton label="帮助" k="H" className="mt-[49px] border-[#8791a7]" />
        </div>
      </div>
      <div className="ml-[15px] h-[153px] w-[485px] shrink-0 border border-[#c0c4d0] bg-[#fdfdfd] p-px">
        <div className="flex h-[24px] items-center border border-r-0 border-[#c0c4d0] bg-[#e6e9f3]">
          <span className="h-full w-[129px] border-r border-[#b9bdca] pt-[3px] pl-[3px]">对象</span>
          <span className="h-full w-[80px] border-r border-[#b9bdca] pt-[3px] pl-1">类型</span>
          <span className="h-full w-[240px] border-r border-[#b9bdca] pt-[3px] pl-1">目标文件</span>
        </div>
      </div>
      <div className="mt-[11px] flex gap-[10px] pl-[18px]">
        <DlgButton label="全选" k="A" className="border-[#8791a7]" />
        <DlgButton label="不选" k="N" className="border-[#8791a7]" />
      </div>
    </div>
  );
}

const Mark = ({ className }: { className: string }) => (
  <div className={`pointer-events-none absolute rounded-[4px] border-3 border-[#ff1f14] ${className}`} />
);

export default function App() {
  return (
    <div className="relative flex h-[886px] w-[1226px] flex-col overflow-hidden bg-[#d6dbe9] font-['Noto_Sans','Noto_Sans_CJK_SC',sans-serif]">
      {/* window edge and main toolbar */}
      <div className="flex h-[6px] shrink-0 items-start pl-[9px]"><span className="h-px w-[7px] bg-[#3543c8]" /></div>
      <div className="flex h-[25px] shrink-0 items-center border-l border-[#aab2c4] pb-px pl-[4px]">
        <Grip />
        <NewDoc className="ml-[3px]" />
        <OpenFolder className="ml-[9px]" />
        <Tri className="ml-[5px]" />
        <Floppy dim className="ml-[6px]" />
        <Sep className="ml-[7px]" />
        <Cut className="ml-[5px]" />
        <Copy className="ml-[6px]" />
        <Paste className="ml-[7px]" />
        <Undo className="ml-[6px]" />
        <Undo flip className="ml-[7px]" />
        <Sep className="ml-[7px]" />
        <Preview className="ml-[6px]" />
        <PageSetup className="ml-[5px]" />
        <Printer className="ml-[6px]" />
        <Sep className="ml-[7px]" />
        <FolderFind className="ml-[6px]" />
        <DocFind className="ml-[7px]" />
        <Sep className="ml-[6px]" />
        <Combo className="ml-[5px] w-[146px]"><T w={36}>{'<默认>'}</T></Combo>
        <Sep className="ml-[6px]" />
        <Help className="ml-[6px]" />
        <Overflow className="ml-[3px]" />
        <Grip className="ml-[6px]" />
        <NewList className="ml-[3px]" />
        <GradBox className="ml-[7px]" />
        <DocLines className="ml-[6px]" />
        <LetterA className="ml-[6px]" />
        <DocTree className="ml-[6px]" />
        <Legend className="ml-[6px]" />
        <Sep className="ml-[7px]" />
        <Globe className="ml-[6px]" />
        <DashLine className="ml-[6px]" />
        <Overflow className="ml-[3px]" />
        <Grip className="ml-[6px]" />
        <LayoutSave className="ml-[4px]" />
        <Hand className="ml-[6px]" />
        <Combo className="ml-[5px] w-[145px]" />
        <Overflow className="ml-[3px]" />
      </div>

      {/* menu bar */}
      <nav className="flex h-[27px] shrink-0 items-center border-l border-[#aab2c4] pl-[4px] text-[12px] text-black">
        <Grip />
        <T w={36} className="ml-[9px]">文件(F)</T>
        <T w={36} className="ml-[15px]">编辑(E)</T>
        <T w={37} className="ml-[15px]">查看(V)</T>
        <T w={37} className="ml-[15px]">项目(P)</T>
        <T w={26} className="ml-[15px]">包(K)</T>
        <T w={27} className="ml-[15px]">图(D)</T>
        <T w={36} className="ml-[15px]">元素(L)</T>
        <T w={36} className="ml-[15px]">工具(T)</T>
        <T w={49} className="ml-[15px]">分析器(A)</T>
        <T w={37} className="ml-[15px]">扩展(X)</T>
        <T w={41} className="ml-[15px]">窗口(W)</T>
        <T w={39} className="ml-[15px]">帮助(H)</T>
      </nav>

      <div className="flex h-[828px] shrink-0">
        {/* diagram view */}
        <main className="flex w-[826px] shrink-0 flex-col border-l-[3px] border-[#c3cad9]">
          <div className="flex h-full flex-col border-t border-r border-l border-[#999fa9]">
            <div className="flex h-[26px] shrink-0 items-center pr-[7px] pl-[6px] text-[12px] text-[#73767f]">
              <I w={10} h={10} className="mt-[2px]"><path d="M1 1l4 4-4 4M5 1l4 4-4 4" stroke="#111" strokeWidth="1.500" /></I>
              <Diagram className="ml-[9px]" />
              <T w={117} className="mt-px ml-[19px]">类图: "SQLServer2008"</T>
              <I w={10} h={9} className="ml-auto mt-[2px]"><path d="M1 4l4-3.500L9 4M1 8.500L5 5l4 3.500" stroke="#111" strokeWidth="1.400" /></I>
              <I w={8} h={4} className="ml-[19px] mt-[2px]"><path d="M0 0h8L4 4z" fill="#111" /></I>
              <I w={9} h={8} className="ml-[13px] mt-[2px]"><path d="M1 .5l6.500 7M7.500.5L1 7.500" stroke="#111" strokeWidth="1.600" /></I>
            </div>
            <div className="flex h-[28px] shrink-0 items-center border-t border-[#999fa9] bg-[#d0d6e4] pb-[3px] pl-[3px]">
              <LetterA c="#5d68a0" />
              <FillColor className="ml-[9px]" />
              <Tri className="ml-[6px]" />
              <Bucket className="ml-[7px]" />
              <Tri className="ml-[5px]" />
              <LineColor className="ml-[6px]" />
              <Tri className="ml-[6px]" />
              <Sep className="ml-[6px]" />
              <span className="ml-[5px] flex h-[22px] w-[46px] shrink-0 border border-[#a9b1c0] text-[13px] text-[#777c88]">
                <span className="w-[26px] pl-[2px] leading-[16px]">1</span>
                <span className="flex grow flex-col items-center justify-between bg-[#fdfdfd] py-[3px]"><Tri className="rotate-180 scale-90" /><Tri className="scale-90" /></span>
              </span>
              <Brush className="ml-[5px]" />
              <Dropper className="ml-[6px]" />
              <Combo className="mt-[2px] ml-[13px] w-[146px]"><T w={45}>默认样式</T></Combo>
              <SavePen className="ml-[8px]" />
              <Tri className="ml-[4px]" />
              <Sep className="ml-[6px]" />
              <Align k="l" className="ml-[7px]" />
              <Align k="r" className="ml-[4px]" />
              <Align k="t" className="ml-[6px]" />
              <Align k="b" className="ml-[7px]" />
              <Front className="ml-[6px]" />
              <Back className="ml-[6px]" />
              <Sep className="ml-[7px]" />
              <Hier className="ml-[8px]" />
              <Tri className="ml-[5px]" />
              <Hand className="ml-[5px]" />
              <Sep className="ml-[7px]" />
              <RedX className="ml-[6px]" />
              <Sep className="ml-[7px]" />
              <span className="ml-[5px] h-[22px] w-[116px] shrink-0 border border-[#8591a8] bg-[#fdfdfd]" />
              <Funnel className="ml-[5px]" />
              <Overflow className="mt-[3px] ml-[3px]" />
            </div>
            <div className="flex min-h-0 grow">
              {/* canvas */}
              <div className="relative w-[804px] shrink-0 overflow-hidden bg-[linear-gradient(180deg,#dde2ee,#f6f8fc)] font-['Liberation_Sans','Noto_Sans_CJK_SC',sans-serif]">
                <div className="h-full bg-[radial-gradient(circle_at_1.5px_13.5px,#98a2b5_0.7px,transparent_0.9px)] bg-[length:14px_14px]" />
                <Node className="top-[-1px] left-[-1px] h-[696px] w-[402px]" title="(产量信息)" name="tb_outputinfo" titleW={69} nameW={95}>
                  <ul className="h-[584px] border-b-[1.500px] border-black pt-[10px]">
                    <li className="pl-[17px] text-black">«column»</li>
                    <Rows rows={outputRows} />
                  </ul>
                  <ul className="pt-[9px]">
                    <li className="pl-[17px] text-black">«PK»</li>
                    <Rows rows={[['+', '(产量信息PK) ', 89, 'PK_outputinfo(varchar)', 153]]} />
                  </ul>
                </Node>
                <Node className="top-[13px] left-[435px] h-[475px] w-[366px]" title="(能耗参数管理)" name="tb_energyparameter" titleW={101} nameW={144}>
                  <ul className="h-[365px] border-b-[1.500px] border-black pt-[10px]">
                    <li className="pl-[17px] text-black">«column»</li>
                    <Rows rows={energyRows} />
                    <li className="mt-[183px] pr-[34px] text-right"><T w={33}>float</T></li>
                    <li className="pr-[45px] text-right"><T w={33}>float</T></li>
                    <li className="pr-[31px] text-right">datetime = getdate()</li>
                  </ul>
                  <p className="pt-[28px] pr-[53px] text-right">(varchar)</p>
                </Node>
                <Node className="top-[505px] left-[449px] h-[400px] w-[350px]" title="(时段信息)" name="tb_electricityplan" titleW={69} nameW={126}>
                  <ul className="pt-[10px]">
                    <li className="pl-[17px] text-black">«column»</li>
                    <Rows rows={periodRows} />
                  </ul>
                </Node>
                <Node className="top-[702px] left-[-1px] h-[200px] w-[430px]" title="(厂区信息)" name="tb_factoryinfo" titleW={69} nameW={97} />
              </div>
              {/* canvas scrollbar */}
              <div className="flex grow flex-col items-center bg-[#d6dbe9] pt-[5px]">
                <I w={9} h={5}><path d="M4.500 0L9 5H0z" fill="#7c808b" /></I>
                <div className="mt-[6px] h-[417px] w-[9px] bg-[#bec2cb]" />
              </div>
            </div>
          </div>
        </main>

        {/* docked panels */}
        <aside className="flex w-[400px] shrink-0 flex-col bg-[#293955] pl-[4px]">
          <section className="flex h-[568px] shrink-0 flex-col">
            <PanelHead title="项目浏览器" w={56} />
            <div className="flex h-[25px] shrink-0 items-center bg-[#cfd6e5] pl-[4px]">
              <NewPkg />
              <NewFolder className="ml-[7px]" />
              <NewDiagram className="ml-[5px]" />
              <NewList className="ml-[6px]" />
              <Sep className="ml-[8px]" />
              <Binoc className="ml-[5px]" />
              <Sep className="ml-[8px]" />
              <DocPen className="ml-[7px]" />
              <Tri className="ml-[6px]" />
              <Windows className="ml-[7px]" />
              <Tri className="ml-[5px]" />
              <Sep className="ml-[6px]" />
              <Arrow className="ml-[5px]" />
              <Arrow down className="ml-[6px]" />
              <Sep className="ml-[8px]" />
              <Help className="ml-[5px]" />
            </div>
            <div className="flex min-h-0 grow">
              <ul className="flex w-[376px] shrink-0 flex-col overflow-hidden border-t border-l border-[#d6dbe9] bg-[#cce8cf] font-['Open_Sans','Noto_Sans_CJK_SC',sans-serif] text-[12.5px] text-[#101418]">
                <TreeRow className="pl-[9px]"><Expander /><ModelIcon className="ml-[9px]" /><T w={38} className="ml-[5px]">Model</T></TreeRow>
                <TreeRow className="pl-[28px]"><Expander /><PkgIcon className="ml-[8px]" /><T w={253} className="ml-[6px]">«DataModel» Data Model - SQLServer2008</T></TreeRow>
                <TreeRow className="pl-[66px]"><Diagram /><T w={170} className="ml-[4px]">Data Model - SQLServer2008</T></TreeRow>
                <TreeRow className="pl-[47px]"><Expander /><FolderIcon className="ml-[9px] mb-[2px]" /><T w={161} className="ml-[5px]">«Database» SQLServer2008</T></TreeRow>
                <TreeRow className="pl-[85px]"><Diagram /><T w={88} className="ml-[4px]">SQLServer2008</T></TreeRow>
                <TreeRow className="bg-[#bec2cb] pl-[66px] text-[#2a3350]"><Expander /><FolderIcon className="ml-[9px] mb-[2px]" /><T w={38} className="ml-[5px]">Tables</T></TreeRow>
                <TreeRow className="pl-[104px]"><Diagram /><T w={38} className="ml-[4px]">Tables</T></TreeRow>
                {tables.map(([name, w], i) => (
                  <TreeRow key={name} className="pl-[85px]">
                    <Expander plus />
                    {i === 0 ? <TableIconB className="ml-[11px]" /> : <TableIcon className="mb-[4px] ml-[11px]" />}
                    <T w={43} className="ml-[6px]">«table»</T>
                    <T w={w} className="ml-[4px]">{name}</T>
                  </TreeRow>
                ))}
              </ul>
              <div className="flex grow flex-col items-center bg-[#d6dbe9] pt-[7px] pr-[2px]">
                <I w={9} h={5}><path d="M4.500 0L9 5H0z" fill="#7c808b" /></I>
                <div className="mt-[6px] h-[179px] w-[9px] bg-[#bec2cb]" />
                <I w={9} h={5} className="mt-auto mb-[5px]"><path d="M0 0h9L4.500 5z" fill="#7c808b" /></I>
              </div>
            </div>
          </section>

          <section className="mt-[5px] flex grow flex-col bg-[#e6e9f3]">
            <PanelHead title="特性" w={23} />
            <div className="flex h-[25px] shrink-0 items-center bg-[#cfd6e5] pl-[2px]">
              <span className="flex h-[22px] w-[22px] items-center justify-center border border-[#e5c365] bg-[#fff3c4]"><Cat /></span>
              <AZ className="ml-[4px]" />
              <Sep className="ml-[6px]" />
              <Diamond pink className="ml-[8px]" />
              <Diamond className="ml-[6px]" />
              <Hand className="ml-[4px]" />
              <Arrow dim className="ml-[6px]" />
              <Sep className="ml-[7px]" />
              <Glasses className="ml-[5px]" />
            </div>
            <div className="flex flex-col pr-[2px] font-['Noto_Sans_CJK_SC',sans-serif] text-[12px] leading-[14px] text-black">
              <div className="flex h-4 items-center font-bold">
                <I w={6} h={6} className="ml-[6px]"><path d="M6 0v6H0z" fill="#8a93a3" /></I>
                <span className="mb-[2px] ml-[6px] flex h-[14px] items-center border border-[#b9bdca] px-px"><T w={46}>包  设置</T></span>
              </div>
              {props.map(([k, v, w]) => (
                <div key={k} className="flex h-4 pb-px pl-[16px]">
                  <span className="w-[140px] bg-[#cce8cf] pl-[4px]">{k}</span>
                  <span className="ml-px flex grow items-center bg-[#cce8cf] pl-[4px] font-['Liberation_Mono','Noto_Sans_CJK_SC',monospace] text-[11.5px]">
                    {v && <T w={w}>{v}</T>}
                  </span>
                </div>
              ))}
              {['项目', '高级'].map((g) => (
                <div key={g} className="flex h-4 items-center pb-[2px] font-bold">
                  <I w={6} h={8} className="ml-[5px]"><path d="M.5.500v7L5 4z" fill="#fff" stroke="#8a93a3" /></I>
                  <span className="ml-[9px]">{g}</span>
                </div>
              ))}
            </div>
          </section>
        </aside>
      </div>

      <Dialog />

      {/* annotations */}
      <Mark className="top-[30px] left-[217px] h-[36px] w-[43px]" />
      <Mark className="top-[326px] left-[307px] h-[35px] w-[187px]" />
      <Mark className="top-[508px] left-[255px] h-[104px] w-[400px]" />
      <Mark className="top-[257px] left-[927px] h-[365px] w-[74px]" />
      <div className="absolute top-[55px] left-[260px] text-[20px] leading-[28px] text-[#ff1f14]">
        <T w={246}>--代码工程--为包生成代码</T>
      </div>
      <div className="absolute top-[856px] left-[1012px] font-['Liberation_Sans',sans-serif] text-[17px] leading-[24px] text-[#f8f9fc] [text-shadow:1px_1px_1px_#b4b8c4]">
        <T w={203}>https://blog.csdn.net/VIP_CR</T>
      </div>
    </div>
  );
}
